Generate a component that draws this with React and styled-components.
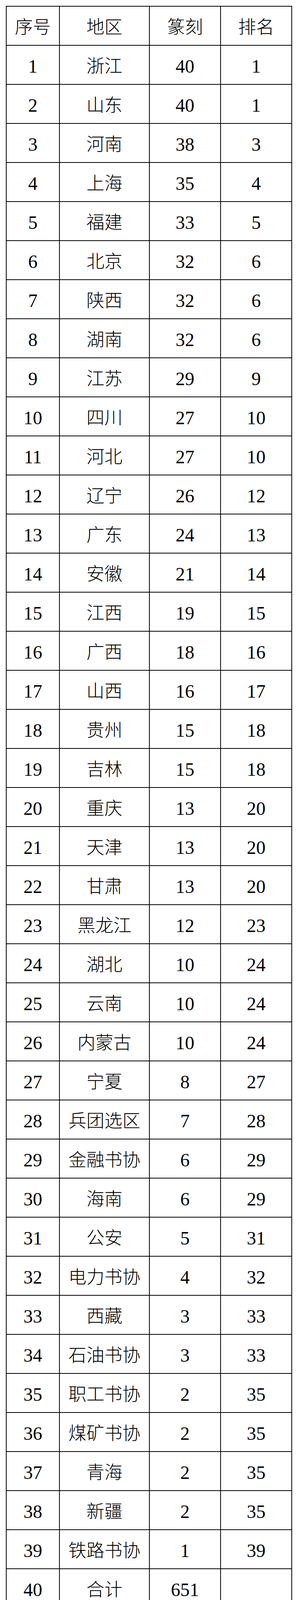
import React from "react";
import styled, { createGlobalStyle } from "styled-components";

const GlobalStyle = createGlobalStyle`
  html, body {
    margin: 0;
    padding: 0;
    background: #ffffff;
  }
`;

const Page = styled.div`
  padding: 15px 0 15px 15px;
  background: #ffffff;
`;

const Table = styled.div`
  width: 730px;
  border-top: 2px solid #000;
  border-left: 2px solid #000;
  font-family: "Liberation Serif", "Noto Sans CJK SC", serif;
  color: #000;
`;

const Row = styled.div`
  display: grid;
  grid-template-columns: 136px 230px 182px 182px;
  height: 100px;
`;

const Cell = styled.div`
  box-sizing: border-box;
  border-right: 2px solid #000;
  border-bottom: 2px solid #000;
  display: flex;
  align-items: center;
  justify-content: center;
  padding-top: 8px;
  font-size: ${(p) => (p.$cjk ? "46px" : "48px")};
  font-weight: ${(p) => (p.$cjk ? 300 : 400)};
  line-height: 1;
  white-space: nowrap;
`;

const rows = [
  ["浙江", 40, 1],
  ["山东", 40, 1],
  ["河南", 38, 3],
  ["上海", 35, 4],
  ["福建", 33, 5],
  ["北京", 32, 6],
  ["陕西", 32, 6],
  ["湖南", 32, 6],
  ["江苏", 29, 9],
  ["四川", 27, 10],
  ["河北", 27, 10],
  ["辽宁", 26, 12],
  ["广东", 24, 13],
  ["安徽", 21, 14],
  ["江西", 19, 15],
  ["广西", 18, 16],
  ["山西", 16, 17],
  ["贵州", 15, 18],
  ["吉林", 15, 18],
  ["重庆", 13, 20],
  ["天津", 13, 20],
  ["甘肃", 13, 20],
  ["黑龙江", 12, 23],
  ["湖北", 10, 24],
  ["云南", 10, 24],
  ["内蒙古", 10, 24],
  ["宁夏", 8, 27],
  ["兵团选区", 7, 28],
  ["金融书协", 6, 29],
  ["海南", 6, 29],
  ["公安", 5, 31],
  ["电力书协", 4, 32],
  ["西藏", 3, 33],
  ["石油书协", 3, 33],
  ["职工书协", 2, 35],
  ["煤矿书协", 2, 35],
  ["青海", 2, 35],
  ["新疆", 2, 35],
  ["铁路书协", 1, 39],
  ["合计", 651, ""],
];

export default function App() {
  return (
    <Page>
      <GlobalStyle />
      <Table>
        <Row>
          <Cell $cjk>序号</Cell>
          <Cell $cjk>地区</Cell>
          <Cell $cjk>篆刻</Cell>
          <Cell $cjk>排名</Cell>
        </Row>
        {rows.map((r, i) => (
          <Row key={i}>
            <Cell>{i + 1}</Cell>
            <Cell $cjk>{r[0]}</Cell>
            <Cell>{r[1]}</Cell>
            <Cell>{r[2]}</Cell>
          </Row>
        ))}
      </Table>
    </Page>
  );
}
